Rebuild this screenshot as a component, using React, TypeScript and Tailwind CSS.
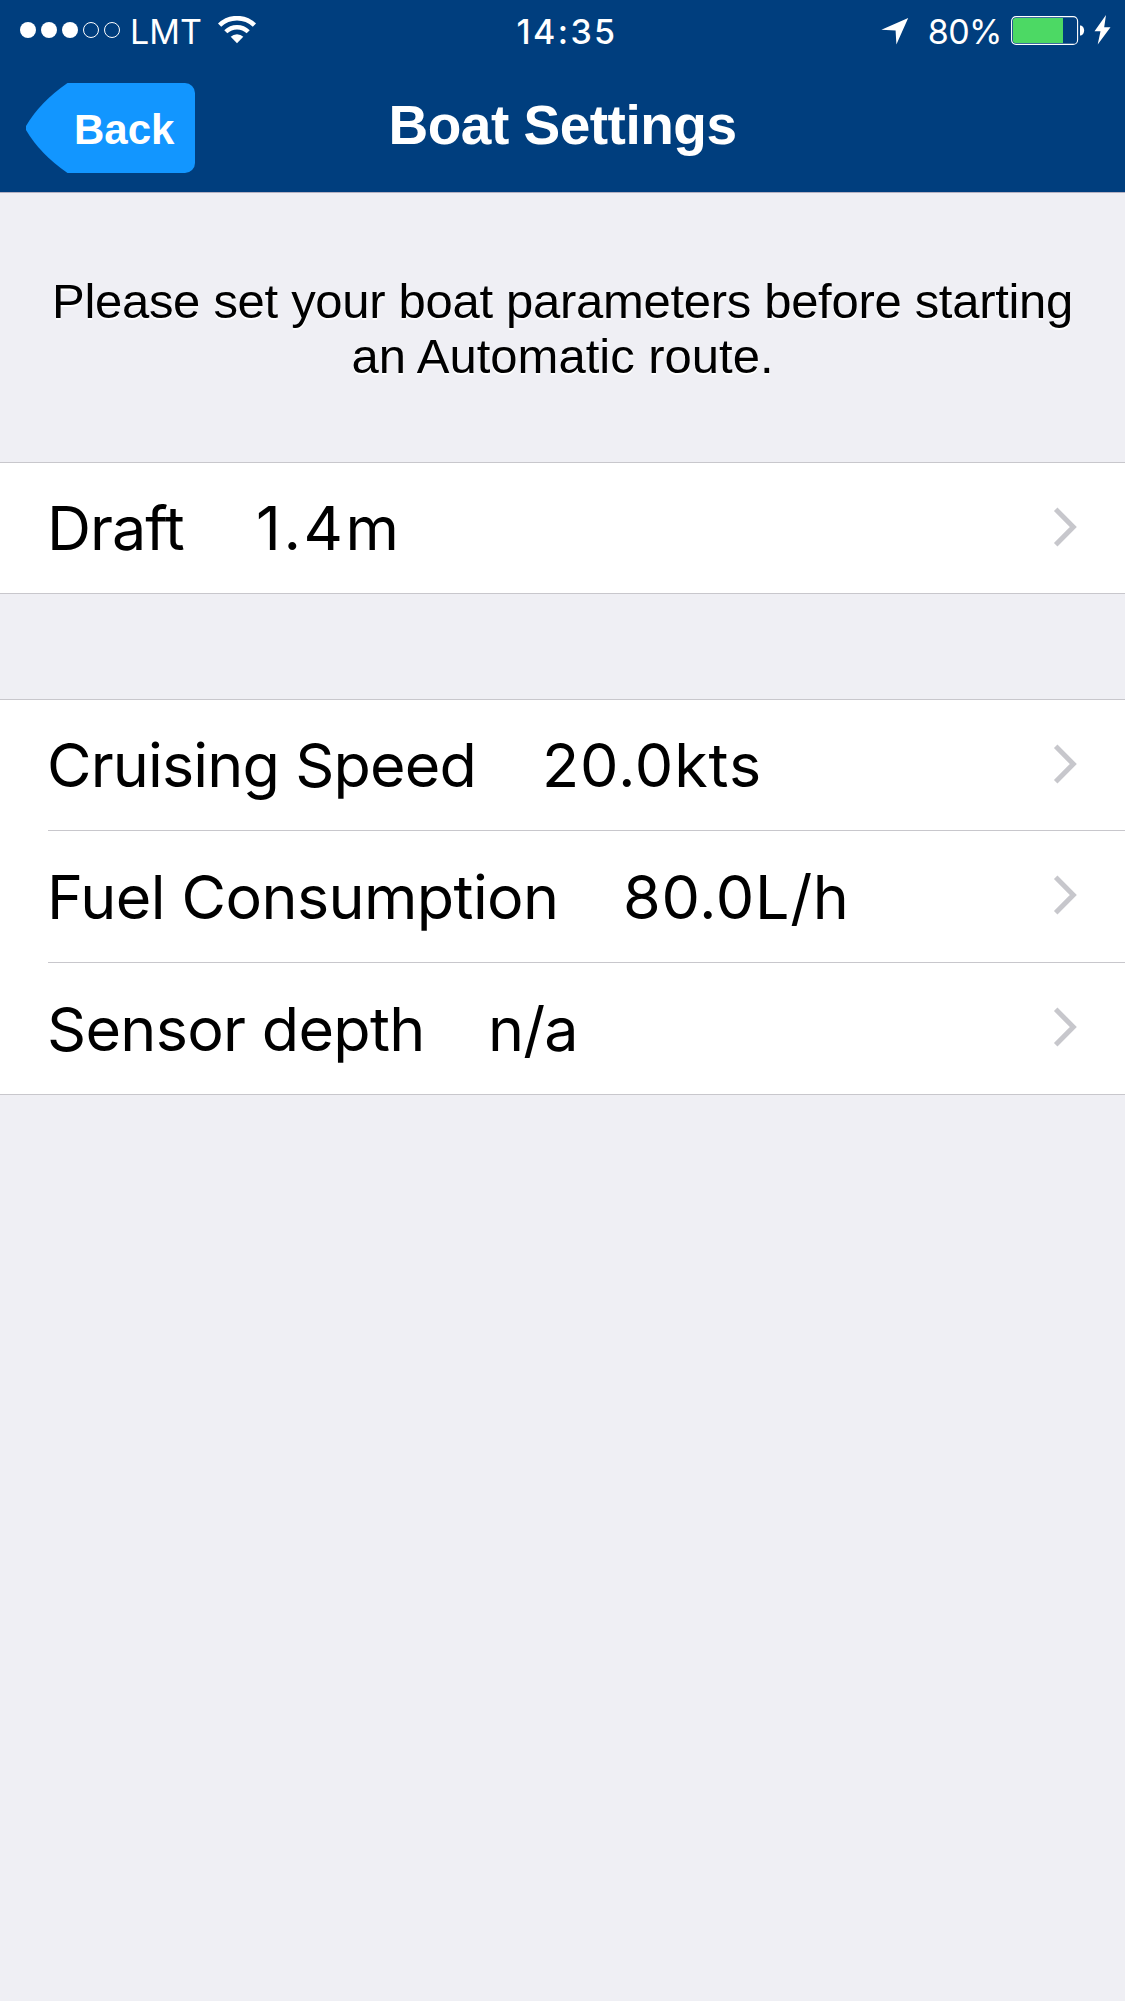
import React from 'react';

interface Setting {
  label: string;
  value: string;
  rowClass: string;
  labelClass: string;
  valueClass: string;
}

const draftSettings: Setting[] = [
  { label: 'Draft', value: '1.4m', rowClass: 'h-[130px]', labelClass: 'w-[209px] tracking-[-1px]', valueClass: 'tracking-[2.6px]' },
];

const cruiseSettings: Setting[] = [
  { label: 'Cruising Speed', value: '20.0kts', rowClass: 'h-[131px] border-b', labelClass: 'w-[495px] tracking-[-0.85px]', valueClass: 'tracking-[0.9px]' },
  { label: 'Fuel Consumption', value: '80.0L/h', rowClass: 'h-[132px] border-b', labelClass: 'w-[576px] tracking-[-0.6px]', valueClass: 'tracking-[0.7px]' },
  { label: 'Sensor depth', value: 'n/a', rowClass: 'h-[131px]', labelClass: 'w-[441px] tracking-[-0.7px]', valueClass: 'tracking-[-0.9px]' },
];

const SignalDots: React.FC = () => (
  <svg className="mb-0.5 ml-5 h-4 w-[101px]" viewBox="0 0 101 16" fill="none">
    <circle cx="8" cy="8" r="8" fill="white" />
    <circle cx="29" cy="8" r="8" fill="white" />
    <circle cx="50" cy="8" r="8" fill="white" />
    <circle cx="71" cy="8" r="7.5" stroke="white" />
    <circle cx="92" cy="8" r="7.5" stroke="white" />
  </svg>
);

const WifiIcon: React.FC = () => (
  <svg className="mb-0.5 ml-4 h-[28px] w-[38px]" viewBox="0 0 38 28" fill="none">
    <path d="M1.6 9.2a25 25 0 0 1 34.8 0" stroke="white" strokeWidth="4.6" />
    <path d="M7.8 15.8a16 16 0 0 1 22.4 0" stroke="white" strokeWidth="4.4" />
    <path d="M12.7 20.7a9 9 0 0 1 12.6 0L19 27.2z" fill="white" />
  </svg>
);

const LocationIcon: React.FC = () => (
  <svg className="h-[28px] w-[28px]" viewBox="0 0 28 28" fill="white">
    <path d="M27.2 1 15.4 27.4 14.6 13.6.4 12.8z" />
  </svg>
);

const BatteryIcon: React.FC = () => (
  <svg className="mb-px ml-[9px] h-[29px] w-[74px]" viewBox="0 0 74 29" fill="none">
    <rect x="0.6" y="0.6" width="66" height="27.8" rx="4.5" stroke="white" strokeWidth="1.1" />
    <path d="M4.5 2H52v25H4.5A2.5 2.5 0 0 1 2 24.5V4.5A2.5 2.5 0 0 1 4.5 2z" fill="#4cd964" />
    <path d="M69 9.5h1c4.2 1.5 4.2 8.5 0 10h-1z" fill="white" />
  </svg>
);

const BoltIcon: React.FC = () => (
  <svg className="mb-0.5 ml-[9px] h-[30px] w-[17px]" viewBox="0 0 17 30" fill="white">
    <path d="M12 0 .5 16.3h6L3.7 29.5 16.5 12.3h-6.3z" />
  </svg>
);

const StatusBar: React.FC = () => (
  <div className="flex h-[62px] items-center font-[Inter,sans-serif] text-[34px] text-white">
    <div className="flex flex-1 items-center">
      <SignalDots />
      <span className="ml-[9px]">LMT</span>
      <WifiIcon />
    </div>
    <span className="pl-[9px] font-medium tracking-[2.4px]">14:35</span>
    <div className="-ml-3.5 flex flex-1 items-center justify-end pr-[14px]">
      <LocationIcon />
      <span className="ml-[19px] tracking-[-0.5px]">80%</span>
      <BatteryIcon />
      <BoltIcon />
    </div>
  </div>
);

const BackButton: React.FC = () => (
  <button className="relative mt-0.5 ml-[26px] flex h-[90px] w-[169px] items-center text-white">
    <svg className="absolute inset-0 h-full w-full" viewBox="0 0 169 90" fill="#1296ff">
      <path d="M41.5 0H159a10 10 0 0 1 10 10V80a10 10 0 0 1-10 10H41.5Q14 71 0 47Q-1 45 0 43Q14 19 41.5 0z" />
    </svg>
    <span className="relative mt-0.5 ml-12 text-[42px] font-bold">Back</span>
  </button>
);

const SettingRow: React.FC<{ setting: Setting }> = ({ setting }) => (
  <div className="bg-white pl-12">
    <div className={`flex items-center border-[#c8c7cc] ${setting.rowClass}`}>
      <span className={`-ml-px shrink-0 whitespace-nowrap ${setting.labelClass}`}>{setting.label}</span>
      <span className={`whitespace-nowrap ${setting.valueClass}`}>{setting.value}</span>
      <svg className="mr-12 mb-[3px] ml-auto h-10 w-6" viewBox="0 0 24 40" fill="none" stroke="#c7c7cc" strokeWidth="5">
        <path d="M2.7 2.3 20.3 20 2.7 37.7" />
      </svg>
    </div>
  </div>
);

const SettingGroup: React.FC<{ settings: Setting[] }> = ({ settings }) => (
  <div className="border-y border-[#c8c7cc] font-[Inter,sans-serif] text-[61px] leading-[74px] text-black">
    {settings.map((setting) => (
      <SettingRow key={setting.label} setting={setting} />
    ))}
  </div>
);

const App: React.FC = () => {
  return (
    <div className="min-h-[2001px] w-[1125px] bg-[#efeff4] font-['Liberation_Sans',sans-serif]">
      <header className="h-[193px] border-b border-[#b5b1c2] bg-[#003e7e]">
        <StatusBar />
        <div className="grid h-[130px] grid-cols-[1fr_auto_1fr] items-center">
          <BackButton />
          <h1 className="mb-[3px] text-[55px] font-bold tracking-[-0.5px] whitespace-nowrap text-white">Boat Settings</h1>
        </div>
      </header>

      <p className="h-[269px] pt-[81px] text-center text-[49px] leading-[55px] tracking-[-0.3px] text-black [text-shadow:0_2px_0_white]">
        Please set your boat parameters before starting
        <br />
        <span className="tracking-normal">an Automatic route.</span>
      </p>

      <SettingGroup settings={draftSettings} />
      <div className="h-[105px]" />
      <SettingGroup settings={cruiseSettings} />
    </div>
  );
};

export default App;
